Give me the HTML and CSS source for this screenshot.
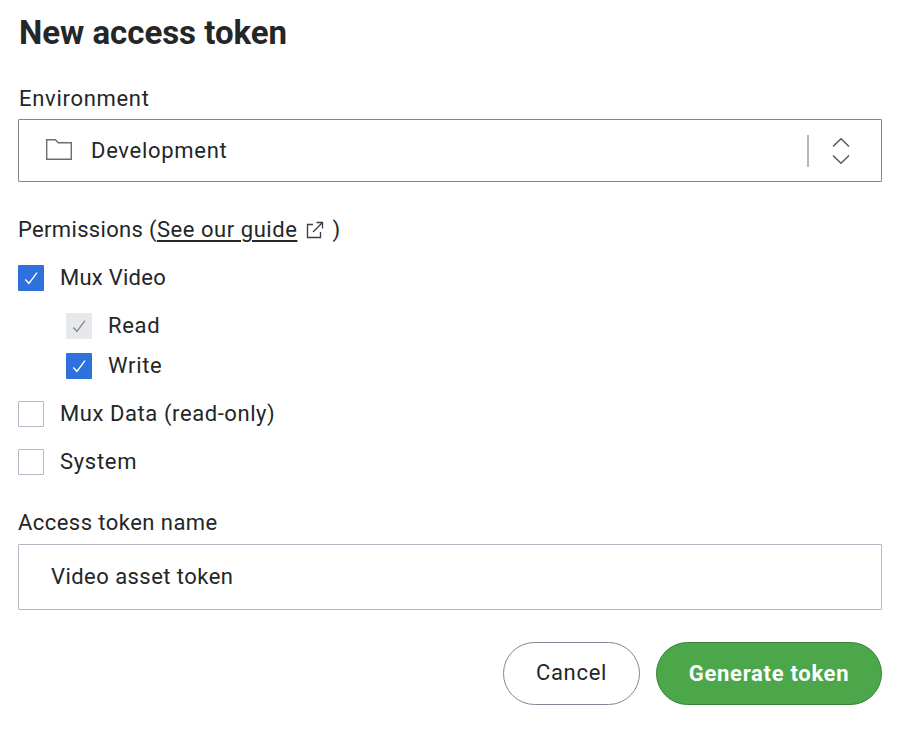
FILE: index.html
```html
<!DOCTYPE html>
<html lang="en">
<head>
    <meta charset="UTF-8">
    <meta name="viewport" content="width=device-width, initial-scale=1.0">
    <title>New access token</title>
    <link rel="stylesheet" href="styles.css">
</head>
<body>
    <form class="tokenForm">
        <h1 class="title">New access token</h1>

        <div class="label envLabel"><span>Environment</span></div>
        <div class="select">
            <svg class="folder" width="28" height="24" viewBox="0 0 28 24">
                <path d="M1.7 1.7H10.3L13.3 4.7H26.3V21.2H1.7Z"/>
            </svg>
            <span class="selectValue">Development</span>
            <span class="divider"></span>
            <svg class="arrows" width="18" height="28" viewBox="0 0 18 28">
                <path d="M1 9.5L9 1.8L17 9.5M1 18.5L9 26.2L17 18.5"/>
            </svg>
        </div>

        <div class="label permLabel">
            <span class="permText">Permissions (</span><a class="guide">See our guide</a>
            <svg class="external" width="18" height="18" viewBox="0 0 18 18">
                <path d="M7 3.5H1.5V16.5H14.5V11M10.5 1.5H16.5V7.5M16.5 1.5L7 11"/>
            </svg>
            <span>)</span>
        </div>

        <div class="row">
            <span class="box checked"><svg width="26" height="26" viewBox="0 0 26 26"><path d="M7.3 14.5L10.9 18.3L19 7.6"/></svg></span>
            <span class="video">Mux Video</span>
        </div>
        <div class="row sub">
            <span class="box disabled"><svg width="26" height="26" viewBox="0 0 26 26"><path d="M7.3 14.5L10.9 18.3L19 7.6"/></svg></span>
            <span class="read">Read</span>
        </div>
        <div class="row sub last">
            <span class="box checked"><svg width="26" height="26" viewBox="0 0 26 26"><path d="M7.3 14.5L10.9 18.3L19 7.6"/></svg></span>
            <span class="write">Write</span>
        </div>
        <div class="row">
            <span class="box"></span>
            <span class="data">Mux Data (read-only)</span>
        </div>
        <div class="row">
            <span class="box"></span>
            <span class="system">System</span>
        </div>

        <div class="label nameLabel"><span>Access token name</span></div>
        <div class="input"><span>Video asset token</span></div>

        <div class="buttons">
            <div class="btn cancel">Cancel</div>
            <div class="btn generate">Generate token</div>
        </div>
    </form>
</body>
</html>
```

FILE: styles.css
```css
*{
    padding: 0px;
    margin: 0px;
    box-sizing: border-box;
}
body{
    background-color: #fff;
    color: #242628;
    font-family: Roboto, "Liberation Sans", sans-serif;
    font-size: 22px;
    line-height: 28px;
    letter-spacing: .7px;
    white-space: nowrap;
}
svg{
    display: block;
    flex: none;
    fill: none;
}
.tokenForm{
    padding: 13px 26px 0px 18px;
}
.title{
    padding-left: 1px;
    font-size: 33px;
    line-height: 40px;
    font-weight: 700;
    letter-spacing: -.03px;
}
.label{
    display: flex;
    align-items: center;
    height: 28px;
}
.envLabel{
    margin: 32px 0px 6px;
    padding-left: 1px;
}
.select{
    display: flex;
    align-items: center;
    height: 63px;
    padding: 0px 31px 0px 26px;
    border: 1px solid #7f868f;
    border-radius: 1px;
}
.folder{
    stroke: #696e76;
    stroke-width: 1.4;
    margin-right: 18px;
    margin-bottom: 2px;
}
.divider{
    width: 2px;
    height: 32px;
    margin-left: auto;
    margin-right: 23px;
    background-color: #b2b6c2;
}
.arrows{
    stroke: #55595f;
    stroke-width: 1.5;
}
.permLabel{
    margin: 34px 0px 21px;
}
.permText{
    letter-spacing: .33px;
}
.guide{
    letter-spacing: .55px;
    text-decoration: underline;
    text-decoration-thickness: 2px;
    text-underline-offset: 3px;
}
.external{
    margin: 0px 8px 0px 9px;
    stroke: #3a3d40;
    stroke-width: 1.3;
}
.row{
    display: flex;
    align-items: center;
    gap: 16px;
    height: 26px;
    margin-bottom: 22px;
}
.video{
    letter-spacing: .25px;
}
.data{
    letter-spacing: .58px;
}
.sub{
    padding-left: 48px;
    margin-bottom: 14px;
}
.last{
    margin-bottom: 22px;
}
.box{
    flex: none;
    width: 26px;
    height: 26px;
    border: 1px solid #b2b9c4;
    border-radius: 1px;
}
.checked{
    border: none;
    background-color: #2e70dc;
    stroke: #fff;
    stroke-width: 1.4;
}
.disabled{
    border: none;
    background-color: #e6e8ec;
    stroke: #858b94;
    stroke-width: 1.4;
}
.nameLabel{
    margin: 34px 0px 7px;
    letter-spacing: .45px;
}
.input{
    display: flex;
    align-items: center;
    height: 66px;
    padding-left: 32px;
    border: 1px solid #b2b7c1;
    border-radius: 1px;
    letter-spacing: .45px;
}
.buttons{
    display: flex;
    justify-content: flex-end;
    gap: 16px;
    margin-top: 32px;
}
.btn{
    height: 63px;
    line-height: 60px;
    border: 1px solid #7f8894;
    border-radius: 32px;
    text-align: center;
}
.cancel{
    width: 137px;
}
.generate{
    width: 226px;
    line-height: 62px;
    color: #fff;
    font-weight: 700;
    background-color: #4ba74a;
    border-color: #37833a;
}
```
